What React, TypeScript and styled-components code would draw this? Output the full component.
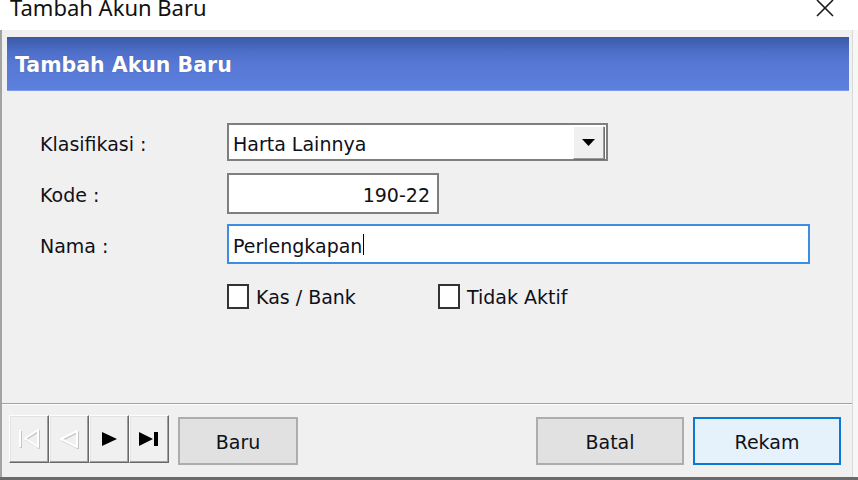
import styled, { createGlobalStyle } from 'styled-components';

const GlobalStyle = createGlobalStyle`
  html, body {
    margin: 0;
    padding: 0;
    background: #ffffff;
  }
  #root {
    width: 858px;
    height: 480px;
  }
`;

const UI_FONT = `"DejaVu Sans", Verdana, sans-serif`;

const App = () => {
  return (
    <>
      <GlobalStyle />
      <SScreen>
        <STitleBar>
          <STitleText>Tambah Akun Baru</STitleText>
          <svg width="21" height="17" viewBox="0 0 21 17">
            <path d="M2 0 L18 16 M18 0 L2 16" stroke="#1a1a1a" strokeWidth="1.6" />
          </svg>
        </STitleBar>

        <SBody>
          <SHeader>
            <SHeaderTitle>Tambah Akun Baru</SHeaderTitle>
          </SHeader>

          <SForm>
            <SRow $height={38} $gap={0}>
              <SLabel>Klasifikasi :</SLabel>
              <SCombo>
                <SComboText>Harta Lainnya</SComboText>
                <SDropButton>
                  <svg width="13" height="7" viewBox="0 0 13 7">
                    <polygon points="0,0 13,0 6.5,7" fill="#000" />
                  </svg>
                </SDropButton>
              </SCombo>
            </SRow>

            <SRow $height={41} $gap={12}>
              <SLabel>Kode :</SLabel>
              <SField $width={212} $align="right">190-22</SField>
            </SRow>

            <SRow $height={40} $gap={10}>
              <SLabel>Nama :</SLabel>
              <SField $width={583} $focused>
                Perlengkapan
                <SCaret />
              </SField>
            </SRow>

            <SRow $height={26} $gap={19}>
              <SLabel />
              <SCheckItem>
                <SCheckBox />
                Kas / Bank
              </SCheckItem>
              <SCheckItem>
                <SCheckBox />
                Tidak Aktif
              </SCheckItem>
            </SRow>
          </SForm>

          <SFooter>
            <SNavGroup>
              <SNavButton>
                <svg width="24" height="22" viewBox="0 0 24 22">
                  <g fill="none" strokeWidth="2" strokeLinejoin="round">
                    <path d="M3 2 V19 M21 2 L8 10.5 L21 19 Z" stroke="#c4c4c4" transform="translate(1 1)" />
                    <path d="M3 2 V19 M21 2 L8 10.5 L21 19 Z" stroke="#ffffff" />
                  </g>
                </svg>
              </SNavButton>
              <SNavButton>
                <svg width="22" height="22" viewBox="0 0 22 22">
                  <g fill="none" strokeWidth="2" strokeLinejoin="round">
                    <path d="M19 3 L3 11 L19 19 Z" stroke="#c4c4c4" transform="translate(1 1)" />
                    <path d="M19 3 L3 11 L19 19 Z" stroke="#ffffff" />
                  </g>
                </svg>
              </SNavButton>
              <SNavButton>
                <svg width="17" height="14" viewBox="0 0 17 14">
                  <polygon points="1,0 16,7 1,14" fill="#000" />
                </svg>
              </SNavButton>
              <SNavButton>
                <svg width="20" height="14" viewBox="0 0 20 14">
                  <polygon points="0,0 14,7 0,14" fill="#000" />
                  <rect x="15" y="0" width="4" height="14" fill="#000" />
                </svg>
              </SNavButton>
            </SNavGroup>

            <SActionButton $width={120} $offset={9}>Baru</SActionButton>
            <SSpacer />
            <SActionButton $width={148}>Batal</SActionButton>
            <SActionButton $width={148} $offset={9} $primary>
              Rekam
            </SActionButton>
          </SFooter>
        </SBody>

        <SBottomStrip />
      </SScreen>
    </>
  );
};
export default App;

const SScreen = styled.div`
  width: 858px;
  height: 480px;
  display: flex;
  flex-direction: column;
  background: #f7f7f7;
  overflow: hidden;
`;

const STitleBar = styled.div`
  height: 30px;
  flex-shrink: 0;
  background: #ffffff;
  display: flex;
  justify-content: space-between;
  align-items: flex-start;
  padding: 0 22px 0 10px;
  overflow: hidden;
`;

const STitleText = styled.div`
  font-family: "Noto Sans", "Open Sans", sans-serif;
  font-size: 22px;
  line-height: 22px;
  margin-top: -4px;
  color: #111111;
`;

const SBody = styled.div`
  flex: 1;
  min-height: 0;
  display: flex;
  flex-direction: column;
  background: #f0f0f0;
  border-left: 2px solid #a3a3a3;
  border-right: 1px solid #d9d9d9;
  margin-right: 5px;
  font-family: ${UI_FONT};
  font-size: 19px;
  color: #101018;
`;

const SHeader = styled.div`
  margin: 7px 3px 0 5px;
  height: 54px;
  flex-shrink: 0;
  display: flex;
  align-items: center;
  padding: 2px 0 0 8px;
  background: linear-gradient(#3a59a6 0%, #4d6fc9 28%, #5879d6 55%, #5b80dd 100%);
  border-bottom: 1px solid #7d9be6;
  box-sizing: border-box;
`;

const SHeaderTitle = styled.div`
  font-weight: bold;
  font-size: 20.5px;
  color: #ffffff;
  text-shadow: 0 0 1px rgba(20, 30, 80, 0.4);
`;

const SForm = styled.div`
  flex: 1;
  display: flex;
  flex-direction: column;
  padding: 32px 0 0 38px;
`;

const SRow = styled.div<{ $height: number; $gap: number }>`
  display: flex;
  align-items: center;
  height: ${(p) => p.$height}px;
  margin-top: ${(p) => p.$gap}px;
`;

const SLabel = styled.div`
  width: 187px;
  flex-shrink: 0;
  padding-top: 3px;
`;

const SCombo = styled.div`
  width: 381px;
  height: 100%;
  box-sizing: border-box;
  border: 2px solid #7f7f7f;
  background: #ffffff;
  display: flex;
  align-items: stretch;
`;

const SComboText = styled.div`
  flex: 1;
  display: flex;
  align-items: center;
  padding: 3px 0 0 4px;
`;

const SDropButton = styled.div`
  width: 31px;
  margin: 1px 2px 0 0;
  box-sizing: border-box;
  display: flex;
  align-items: center;
  justify-content: center;
  background: #f0f0f0;
  border: 1px solid;
  border-color: #ffffff #9a9a9a #9a9a9a #ffffff;
  box-shadow: 1px 1px 0 #6e6e6e;
`;

const SField = styled.div<{ $width: number; $focused?: boolean; $align?: 'left' | 'right' }>`
  width: ${(p) => p.$width}px;
  height: 100%;
  box-sizing: border-box;
  border: 2px solid ${(p) => (p.$focused ? '#3d8ee2' : '#7f7f7f')};
  background: #ffffff;
  display: flex;
  align-items: center;
  justify-content: ${(p) => (p.$align === 'right' ? 'flex-end' : 'flex-start')};
  padding: 3px 7px 0 4px;
`;

const SCaret = styled.span`
  display: inline-block;
  width: 1px;
  height: 21px;
  margin: -3px 0 0 1px;
  background: #000000;
`;

const SCheckItem = styled.div`
  width: 211px;
  display: flex;
  align-items: center;
  gap: 7px;
  padding-top: 2px;
`;

const SCheckBox = styled.div`
  width: 22px;
  height: 25px;
  box-sizing: border-box;
  border: 2px solid #333333;
  background: #ffffff;
  margin-top: -2px;
`;

const SFooter = styled.div`
  height: 74px;
  flex-shrink: 0;
  box-sizing: border-box;
  border-top: 1px solid #a0a0a0;
  box-shadow: inset 0 1px 0 #ffffff;
  display: flex;
  align-items: flex-start;
  padding: 11px 11px 0 7px;
`;

const SNavGroup = styled.div`
  display: flex;
`;

const SNavButton = styled.div`
  width: 40px;
  height: 48px;
  box-sizing: border-box;
  display: flex;
  align-items: center;
  justify-content: center;
  background: #f0f0f0;
  border: 1px solid;
  border-color: #fdfdfd #696969 #696969 #fdfdfd;
  box-shadow: inset -1px -1px 0 #a0a0a0, inset 1px 1px 0 #e3e3e3;
`;

const SActionButton = styled.div<{ $width: number; $offset?: number; $primary?: boolean }>`
  width: ${(p) => p.$width}px;
  height: 48px;
  margin-top: 2px;
  margin-left: ${(p) => p.$offset ?? 0}px;
  box-sizing: border-box;
  display: flex;
  align-items: center;
  justify-content: center;
  padding-top: 2px;
  background: ${(p) => (p.$primary ? '#e5f1fb' : '#e1e1e1')};
  border: 2px solid ${(p) => (p.$primary ? '#0a78d6' : '#adadad')};
`;

const SSpacer = styled.div`
  flex: 1;
`;

const SBottomStrip = styled.div`
  height: 3px;
  flex-shrink: 0;
  background: #6a6a6a;
`;
